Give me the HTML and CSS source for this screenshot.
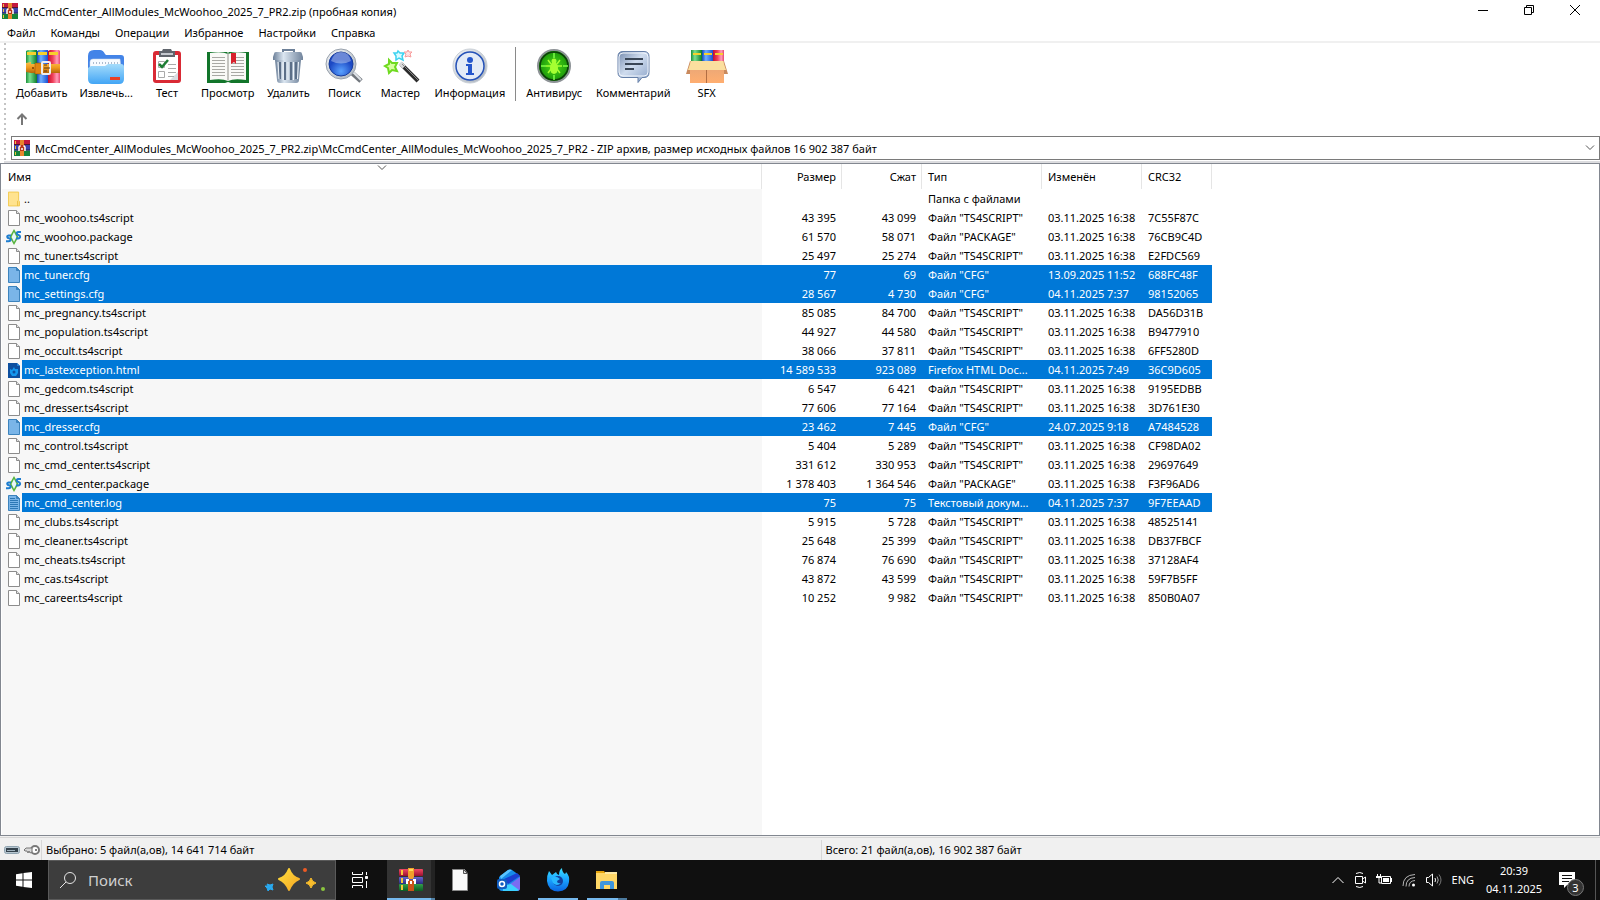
FILE: index.html
```html
<!DOCTYPE html>
<html lang="ru">

<head>
  <meta charset="UTF-8">
  <meta name="viewport" content="width=device-width, initial-scale=1.0">
  <title>McCmdCenter_AllModules_McWoohoo_2025_7_PR2.zip (пробная копия)</title>
  <link rel="stylesheet" href="styles.css">
</head>

<body>
  <!-- Общие значки -->
  <svg class="sprite" aria-hidden="true">
    <defs>
      <linearGradient id="gGreen"><stop offset="0" stop-color="#1c8f3c"/><stop offset=".35" stop-color="#7be08f"/><stop offset="1" stop-color="#0b7a2b"/></linearGradient>
      <linearGradient id="gBlue"><stop offset="0" stop-color="#1546b8"/><stop offset=".35" stop-color="#6fb0ff"/><stop offset="1" stop-color="#1a4fd0"/></linearGradient>
      <linearGradient id="gPink"><stop offset="0" stop-color="#c3102f"/><stop offset=".4" stop-color="#f0405a"/><stop offset=".75" stop-color="#ff9dba"/><stop offset="1" stop-color="#e8476e"/></linearGradient>
      <linearGradient id="gBelt" x2="0" y2="1"><stop offset="0" stop-color="#f9c04a"/><stop offset=".5" stop-color="#f09a1e"/><stop offset="1" stop-color="#b5650b"/></linearGradient>
      <linearGradient id="gFolder" x2="0" y2="1"><stop offset="0" stop-color="#a5dcfb"/><stop offset="1" stop-color="#42a5f5"/></linearGradient>
      <linearGradient id="gSteel"><stop offset="0" stop-color="#6b7f98"/><stop offset=".35" stop-color="#dbe6f1"/><stop offset="1" stop-color="#71849c"/></linearGradient>
      <linearGradient id="gRing" x2="1" y2="1"><stop offset="0" stop-color="#f4f6f8"/><stop offset="1" stop-color="#a7b0ba"/></linearGradient>
      <radialGradient id="gLens" cx=".5" cy=".8"><stop offset="0" stop-color="#5aa2ff"/><stop offset="1" stop-color="#1c49c4"/></radialGradient>
      <radialGradient id="gVirus"><stop offset="0" stop-color="#4ddb1c"/><stop offset="1" stop-color="#159006"/></radialGradient>
      <linearGradient id="gNote" x2="1" y2="1"><stop offset="0" stop-color="#7389ad"/><stop offset=".45" stop-color="#cfdcee"/><stop offset="1" stop-color="#8ba3c8"/></linearGradient>
      <linearGradient id="gBox" x2="0" y2="1"><stop offset="0" stop-color="#e3a579"/><stop offset="1" stop-color="#ffae70"/></linearGradient>
      <linearGradient id="gStar" x2="1" y2="1"><stop offset="0" stop-color="#ffdf3e"/><stop offset="1" stop-color="#f5a623"/></linearGradient>
      <linearGradient id="gFox" x2="0" y2="1"><stop offset="0" stop-color="#3ce0ff"/><stop offset=".5" stop-color="#1aa3ff"/><stop offset="1" stop-color="#0a63e0"/></linearGradient>
      <linearGradient id="gRed" x2="0" y2="1"><stop offset="0" stop-color="#ef4a63"/><stop offset="1" stop-color="#9c1030"/></linearGradient>
      <linearGradient id="gViolet" x2="0" y2="1"><stop offset="0" stop-color="#6464d0"/><stop offset="1" stop-color="#2a2c80"/></linearGradient>
      <linearGradient id="gLeaf" x2="0" y2="1"><stop offset="0" stop-color="#33a04b"/><stop offset="1" stop-color="#0b5c24"/></linearGradient>
    </defs>

    <symbol id="rar" viewBox="0 0 16 16">
      <path fill="#c2183f" d="M0 0h16v5H0z"/>
      <path fill="#3c43ab" d="M0 5h16v5.500H0z"/>
      <path fill="#15843a" d="M0 10.500h16V16H0z"/>
      <path fill="#51152e" d="M0 4h16v1H0z"/>
      <path fill="#20235f" d="M0 9.500h16v1H0z"/>
      <path fill="#f0c23a" d="M1 1h1v3H1zM1 6h1v3H1zM1 12h1v3H1z"/>
      <path fill="#e8862c" d="M6 0h4v5H6zM6 11h4v5H6z"/>
      <path fill="#b83618" d="M5 5h6v6H5z"/>
      <path fill="none" stroke="#fff" stroke-width="1.500" d="M5 11V7l1.500-1.500M11 11V7L9.500 5.500M8 8v2"/>
    </symbol>
    <symbol id="file" viewBox="0 0 12 16">
      <path fill="#fff" stroke="#8c8c8c" d="M.5.500h8l3 3v12H.5z"/>
      <path fill="#e4e4e4" stroke="#8c8c8c" d="M8.500.500v3h3"/>
    </symbol>
    <symbol id="file-selected" viewBox="0 0 12 16">
      <path fill="#7ab5e8" stroke="#3c83bd" d="M.5.500h8l3 3v12H.5z"/>
      <path fill="#3c83bd" stroke="#3c83bd" d="M8.500.500v3h3z"/>
    </symbol>
    <symbol id="file-log" viewBox="0 0 12 16">
      <path fill="#7ab5e8" stroke="#3c83bd" d="M.5.500h8l3 3v12H.5z"/>
      <path fill="#3c83bd" stroke="#3c83bd" d="M8.500.500v3h3z"/>
      <path stroke="#2d78b5" d="M2 3.500h5M2 5.500h8M2 7.500h8M2 9.500h8M2 11.500h8M2 13.500h8"/>
    </symbol>
    <symbol id="file-html" viewBox="0 0 12 16">
      <path fill="#0d4f9f" d="M0 1h9l3 3v12H0z"/>
      <path fill="#1e7fd6" d="M9 1v3h3z"/>
      <path fill="#1497ee" d="M2 7l2 1 2-3 1 2 3 0v4l-2 3H4l-2-3z"/>
      <circle cx="6" cy="10" r="1.500" fill="#0d4f9f"/>
    </symbol>
    <symbol id="folder" viewBox="0 0 13 16">
      <path fill="#ffe38f" stroke="#f2c94c" d="M.5.500h11v9l1 1v5H.5z"/>
      <path stroke="#e8bb3a" d="M10.500 10v5.500"/>
    </symbol>
    <symbol id="package" viewBox="0 0 16 16">
      <path fill="#57b33e" d="M8 0l4.500 8L8 16 3.500 8z"/>
      <path fill="#eaf6fb" d="M8 3l2.500 5L8 13 5.500 8z"/>
      <path fill="none" stroke="#1f7ed0" stroke-width="2" d="M5 6.500H2.500C.5 7 1 9 3 9.200s2.500 3-.5 3.100H0M15 3h-3c-2 .5-1.500 2.600.5 3s2.500 3.200-.5 3.400h-2"/>
    </symbol>
    <symbol id="chevron" viewBox="0 0 10 6">
      <path fill="none" stroke="#555" d="M1 .500l4 4 4-4"/>
    </symbol>
  </svg>

  <header class="titlebar">
    <svg class="app-icon"><use href="#rar"/></svg>
    <h1>McCmdCenter_AllModules_McWoohoo_2025_7_PR2.zip (пробная копия)</h1>
    <div class="window-buttons">
      <button aria-label="Свернуть"><svg viewBox="0 0 10 10"><path d="M0 5.500h10"/></svg></button>
      <button aria-label="Восстановить"><svg viewBox="0 0 10 10"><path d="M.5 2.500h7v7h-7zM2.500 2.500v-2h7v7h-2"/></svg></button>
      <button aria-label="Закрыть"><svg viewBox="0 0 10 10"><path d="M0 0l10 10M10 0L0 10"/></svg></button>
    </div>
  </header>

  <nav class="menu">
    <button>Файл</button>
    <button>Команды</button>
    <button>Операции</button>
    <button>Избранное</button>
    <button>Настройки</button>
    <button>Справка</button>
  </nav>

  <section class="rebar">
    <div class="toolbar">
      <button>
        <svg viewBox="0 0 44 36">
          <path fill="url(#gGreen)" d="M6 3l2-1h9v33H6z"/><path fill="url(#gBlue)" d="M17 3l2-1h9v33H17z"/><path fill="url(#gPink)" d="M28 3l2-1h9l1 1v32H28z"/>
          <path fill="#f7d02c" d="M7 4h9v3H7zM18 4h9v3h-9zM29 4h9v3h-9z"/>
          <path fill="url(#gBelt)" d="M6 15l5-1v11l-5-1zM11 16h29v9H11z"/>
          <circle cx="13" cy="20" r="1" fill="#7a3d05"/><circle cx="18" cy="20" r="1" fill="#7a3d05"/>
          <path fill="#e08613" stroke="#8b4b08" stroke-width=".5" d="M15 15h7v11h-7z"/>
          <rect x="22" y="14" width="8" height="12" rx="1" fill="none" stroke="#eee" stroke-width="2"/><path stroke="#5a3a10" d="M24 20h6M24 17h3M24 23h3"/>
        </svg>
        Добавить
      </button>
      <button>
        <svg viewBox="0 0 44 36">
          <path fill="#4384e8" d="M4 8q0-6 6-6h6q3 0 5 4l1 1h15q3 0 3 3v20H4z"/>
          <path fill="#f8fbff" stroke="#c8d4e4" stroke-width=".5" d="M6 14q0-3 3-3h27l1 9H6z"/>
          <path stroke="#aebccf" stroke-dasharray="1 2" stroke-width="2" d="M9 15h27"/>
          <path fill="url(#gFolder)" d="M4 20l3-2h14l3-2h13q3 0 3 3v12q0 5-5 5H9q-5 0-5-5z"/>
          <path fill="#e84025" d="M26 29h10v3H26z"/>
        </svg>
        Извлечь...
      </button>
      <button>
        <svg viewBox="0 0 44 36">
          <rect x="8" y="3" width="28" height="32" rx="3" fill="#d92a35"/><path fill="#fff" d="M11 7h22v25H11z"/><path fill="#d7dbe0" d="M33 24v8h-8z"/>
          <path fill="#60656d" d="M14 3h3l1-2h8l1 2h3v6H14z"/><path fill="#c4c8ce" d="M16 5h12v2H16z"/>
          <path fill="none" stroke="#aaa" d="M13.500 13.500h6v6h-6zM13.500 23.500h6v6h-6zM23 16.500h8M23 20.500h8M23 24.500h8M23 28.500h6"/>
          <path fill="none" stroke="#1e7e34" stroke-width="2.500" d="M14 16l3 3 6-7"/>
        </svg>
        Тест
      </button>
      <button>
        <svg viewBox="0 0 44 36">
          <path fill="#12752a" d="M1 4h20l1 1 1-1h20v31H25l-3-1-3 1H1z"/>
          <path fill="#f9f9f7" d="M4 5q12-2 18 1 6-3 18-1v27q-12-2-18 1-6-3-18-1z"/>
          <path fill="#c4c4c0" d="M21 5l1 1 1-1v27l-1 1-1-1z"/>
          <path stroke="#a8a8a4" d="M6 9.500h13M6 12.500h13M6 15.500h13M6 18.500h13M6 21.500h13M6 24.500h13M6 27.500h13M30 9.500h8M30 12.500h8M25 15.500h13M25 18.500h13M25 21.500h13M25 24.500h13M25 27.500h13"/>
          <path fill="#d8202c" d="M25 5h5v11l-2-2-3 2z"/>
        </svg>
        Просмотр
      </button>
      <button>
        <svg viewBox="0 0 44 36">
          <path fill="none" stroke="#6d8098" stroke-width="2" d="M17 4V2h11v2"/>
          <path fill="url(#gSteel)" d="M8 6q0-2 2-2h24q2 0 2 2l1 3v3H7V9z"/>
          <path fill="url(#gSteel)" d="M9 12h26l-2 20q0 3-3 3H14q-3 0-3-3z"/>
          <path stroke="#5c6f88" stroke-width="2" d="M14 14v17M19 14v18M25 14v18M30 14v17"/>
          <path stroke="#eef4fa" d="M12 14l1 17M17 14v18M22 14v18M27.500 14v18M32.500 14l-1 17"/>
        </svg>
        Удалить
      </button>
      <button>
        <svg viewBox="0 0 44 36">
          <path stroke="#71767d" stroke-width="5" d="M29 24l10 9"/><path stroke="#dfe3e8" stroke-width="2" d="M30 23l9 9"/>
          <circle cx="19" cy="16" r="15" fill="url(#gRing)" stroke="#98a1ac"/>
          <circle cx="19" cy="16" r="12" fill="url(#gLens)" stroke="#173b9c"/>
          <path fill="#fff" opacity=".35" d="M9 13q3-9 10-9 8 0 10 9-10 5-20 0z"/>
        </svg>
        Поиск
      </button>
      <button>
        <svg viewBox="0 0 44 36">
          <path fill="none" stroke="#2c2c2c" stroke-width="4" d="M23 16l17 17"/><path stroke="#d8d8d8" stroke-width="4" d="M22 15l4 4"/><path stroke="#888" d="M24 16l17 17"/>
          <path fill="#d6ffa0" stroke="#6fda20" stroke-width="2" d="M11 12l3 3 5 0-2 4 2 4-5-1-3 3-1-5-3-2 4-2z"/>
          <path fill="#d9fbff" stroke="#3cd2f0" stroke-width="1.500" d="M20 3l2 2 4 0-2 3 1 4-4-2-3 2 0-4-2-3 3 0z"/>
          <path fill="#ffe3e3" stroke="#f79c9c" d="M30 2l1 2h3l-2 2 1 3-3-1-3 1 1-3-2-2h3z"/>
        </svg>
        Мастер
      </button>
      <button>
        <svg viewBox="0 0 44 36">
          <circle cx="22" cy="18" r="17" fill="url(#gRing)" stroke="#c9cfd6"/>
          <circle cx="22" cy="18" r="14" fill="#e3ebf7" stroke="#2552b8" stroke-width="1.500"/>
          <circle cx="22" cy="12" r="3" fill="#2456cc"/><path fill="#2456cc" d="M18 16h6v9h2v2h-8v-2h2v-7h-2z"/>
        </svg>
        Информация
      </button>
      <span class="separator"></span>
      <button>
        <svg viewBox="0 0 44 36">
          <circle cx="22" cy="18" r="16" fill="url(#gVirus)" stroke="#8d9296" stroke-width="2"/><circle cx="22" cy="18" r="14" fill="none" stroke="#0c3d0a" stroke-width="1.500"/>
          <path stroke="#7dff4a" stroke-width="1.500" d="M22 5v5M22 27v5M9 18h5M31 18h5"/>
          <path fill="none" stroke="#a5ff32" stroke-width="1.500" d="M16 12l3 4M28 12l-3 4M14 18h5M30 18h-5M16 25l3-4M28 25l-3-4"/>
          <ellipse cx="22" cy="20" rx="4" ry="6" fill="#a5ff32"/><circle cx="22" cy="13" r="2.500" fill="#a5ff32"/>
        </svg>
        Антивирус
      </button>
      <button>
        <svg viewBox="0 0 44 36">
          <path fill="url(#gNote)" stroke="#657fa8" d="M12 3.500h21q5 0 5 5v16q0 5-5 5h-2l-4 5v-5H12q-5 0-5-5v-16q0-5 5-5z"/>
          <path fill="none" stroke="#f0f5fc" d="M12 5h21q4 0 4 4v15q0 4-4 4H12q-4 0-4-4V9q0-4 4-4z"/>
          <path stroke="#3a4656" stroke-width="2" d="M14 11h18M14 16h18M14 21h9"/>
        </svg>
        Комментарий
      </button>
      <button>
        <svg viewBox="0 0 44 36">
          <path fill="url(#gGreen)" d="M6 2h11v12H6z"/><path fill="url(#gBlue)" d="M17 2h11v12H17z"/><path fill="url(#gPink)" d="M28 2h11v12H28z"/>
          <path fill="#f7d02c" d="M8 5h8v2H8zM19 5h8v2h-8zM30 5h8v2h-8z"/>
          <path fill="#c98a5e" d="M5 13L1 26h4v-6zM39 13l4 13h-4v-6z"/>
          <path fill="url(#gBox)" d="M5 13h34v22H5z"/><path fill="#fbdf9f" d="M6 13h32l3 9H3z"/><path stroke="#b26e43" d="M21.500 22v13"/>
        </svg>
        SFX
      </button>
    </div>

    <button class="up" aria-label="На один уровень вверх">
      <svg viewBox="0 0 12 12"><path d="M6 12V1.500M1.500 6L6 1.500 10.500 6"/></svg>
    </button>

    <div class="address">
      <svg class="app-icon"><use href="#rar"/></svg>
      <select aria-label="Адрес">
        <option>McCmdCenter_AllModules_McWoohoo_2025_7_PR2.zip\McCmdCenter_AllModules_McWoohoo_2025_7_PR2 - ZIP архив, размер исходных файлов 16 902 387 байт</option>
      </select>
      <svg class="chevron"><use href="#chevron"/></svg>
    </div>
  </section>

  <main class="list">
    <svg class="sort-mark"><use href="#chevron"/></svg>
    <table>
      <colgroup>
        <col class="col-name"><col class="col-size"><col class="col-size"><col class="col-type"><col class="col-date"><col class="col-crc">
      </colgroup>
      <thead>
        <tr><th>Имя</th><th>Размер</th><th>Сжат</th><th>Тип</th><th>Изменён</th><th>CRC32</th></tr>
      </thead>
      <tbody>
        <tr><td><svg><use href="#folder"/></svg><span>..</span></td><td></td><td></td><td>Папка с файлами</td><td></td><td></td></tr>
        <tr><td><svg><use href="#file"/></svg><span>mc_woohoo.ts4script</span></td><td>43 395</td><td>43 099</td><td>Файл "TS4SCRIPT"</td><td>03.11.2025 16:38</td><td>7C55F87C</td></tr>
        <tr><td><svg class="wide"><use href="#package"/></svg><span>mc_woohoo.package</span></td><td>61 570</td><td>58 071</td><td>Файл "PACKAGE"</td><td>03.11.2025 16:38</td><td>76CB9C4D</td></tr>
        <tr><td><svg><use href="#file"/></svg><span>mc_tuner.ts4script</span></td><td>25 497</td><td>25 274</td><td>Файл "TS4SCRIPT"</td><td>03.11.2025 16:38</td><td>E2FDC569</td></tr>
        <tr class="selected"><td><svg><use href="#file-selected"/></svg><span>mc_tuner.cfg</span></td><td>77</td><td>69</td><td>Файл "CFG"</td><td>13.09.2025 11:52</td><td>688FC48F</td></tr>
        <tr class="selected"><td><svg><use href="#file-selected"/></svg><span>mc_settings.cfg</span></td><td>28 567</td><td>4 730</td><td>Файл "CFG"</td><td>04.11.2025 7:37</td><td>98152065</td></tr>
        <tr><td><svg><use href="#file"/></svg><span>mc_pregnancy.ts4script</span></td><td>85 085</td><td>84 700</td><td>Файл "TS4SCRIPT"</td><td>03.11.2025 16:38</td><td>DA56D31B</td></tr>
        <tr><td><svg><use href="#file"/></svg><span>mc_population.ts4script</span></td><td>44 927</td><td>44 580</td><td>Файл "TS4SCRIPT"</td><td>03.11.2025 16:38</td><td>B9477910</td></tr>
        <tr><td><svg><use href="#file"/></svg><span>mc_occult.ts4script</span></td><td>38 066</td><td>37 811</td><td>Файл "TS4SCRIPT"</td><td>03.11.2025 16:38</td><td>6FF5280D</td></tr>
        <tr class="selected"><td><svg><use href="#file-html"/></svg><span>mc_lastexception.html</span></td><td>14 589 533</td><td>923 089</td><td>Firefox HTML Doc...</td><td>04.11.2025 7:49</td><td>36C9D605</td></tr>
        <tr><td><svg><use href="#file"/></svg><span>mc_gedcom.ts4script</span></td><td>6 547</td><td>6 421</td><td>Файл "TS4SCRIPT"</td><td>03.11.2025 16:38</td><td>9195EDBB</td></tr>
        <tr><td><svg><use href="#file"/></svg><span>mc_dresser.ts4script</span></td><td>77 606</td><td>77 164</td><td>Файл "TS4SCRIPT"</td><td>03.11.2025 16:38</td><td>3D761E30</td></tr>
        <tr class="selected"><td><svg><use href="#file-selected"/></svg><span>mc_dresser.cfg</span></td><td>23 462</td><td>7 445</td><td>Файл "CFG"</td><td>24.07.2025 9:18</td><td>A7484528</td></tr>
        <tr><td><svg><use href="#file"/></svg><span>mc_control.ts4script</span></td><td>5 404</td><td>5 289</td><td>Файл "TS4SCRIPT"</td><td>03.11.2025 16:38</td><td>CF98DA02</td></tr>
        <tr><td><svg><use href="#file"/></svg><span>mc_cmd_center.ts4script</span></td><td>331 612</td><td>330 953</td><td>Файл "TS4SCRIPT"</td><td>03.11.2025 16:38</td><td>29697649</td></tr>
        <tr><td><svg class="wide"><use href="#package"/></svg><span>mc_cmd_center.package</span></td><td>1 378 403</td><td>1 364 546</td><td>Файл "PACKAGE"</td><td>03.11.2025 16:38</td><td>F3F96AD6</td></tr>
        <tr class="selected"><td><svg><use href="#file-log"/></svg><span>mc_cmd_center.log</span></td><td>75</td><td>75</td><td>Текстовый докум...</td><td>04.11.2025 7:37</td><td>9F7EEAAD</td></tr>
        <tr><td><svg><use href="#file"/></svg><span>mc_clubs.ts4script</span></td><td>5 915</td><td>5 728</td><td>Файл "TS4SCRIPT"</td><td>03.11.2025 16:38</td><td>48525141</td></tr>
        <tr><td><svg><use href="#file"/></svg><span>mc_cleaner.ts4script</span></td><td>25 648</td><td>25 399</td><td>Файл "TS4SCRIPT"</td><td>03.11.2025 16:38</td><td>DB37FBCF</td></tr>
        <tr><td><svg><use href="#file"/></svg><span>mc_cheats.ts4script</span></td><td>76 874</td><td>76 690</td><td>Файл "TS4SCRIPT"</td><td>03.11.2025 16:38</td><td>37128AF4</td></tr>
        <tr><td><svg><use href="#file"/></svg><span>mc_cas.ts4script</span></td><td>43 872</td><td>43 599</td><td>Файл "TS4SCRIPT"</td><td>03.11.2025 16:38</td><td>59F7B5FF</td></tr>
        <tr><td><svg><use href="#file"/></svg><span>mc_career.ts4script</span></td><td>10 252</td><td>9 982</td><td>Файл "TS4SCRIPT"</td><td>03.11.2025 16:38</td><td>850B0A07</td></tr>
      </tbody>
    </table>
  </main>

  <footer class="status">
    <div class="status-icons">
      <svg width="16" height="12" viewBox="0 0 16 12"><rect x=".5" y="2.500" width="15" height="7" rx="2" fill="#b7c6d0" stroke="#8fa3b0"/><path fill="#34424c" d="M2 4h12v4H2z"/><path fill="#9fb1bd" d="M3 6h8v1H3z"/></svg>
      <svg width="16" height="12" viewBox="0 0 16 12"><circle cx="11" cy="6" r="4" fill="#fff" stroke="#777" stroke-width="2"/><circle cx="12" cy="6" r="1" fill="#555"/><path fill="#d8d8d8" stroke="#777" d="M8 4H2L0 6l1 1h2l1 2 1-2 1 2 2-1z"/></svg>
    </div>
    <p>Выбрано: 5 файл(а,ов), 14 641 714 байт</p>
    <p>Всего: 21 файл(а,ов), 16 902 387 байт</p>
  </footer>

  <div class="taskbar">
    <button class="start" aria-label="Пуск">
      <svg width="16" height="16" viewBox="0 0 16 16"><path fill="#fff" d="M0 2.200L6.500 1.300V7.500H0zM7.500 1.100L16 0v7.500H7.500zM0 8.500h6.500v6.200L0 13.800zM7.500 8.500H16V16l-8.500-1.100z"/></svg>
    </button>
    <label class="search">
      <svg width="16" height="16" viewBox="0 0 16 16"><circle cx="10" cy="6" r="5.500" fill="none" stroke="#e6e6e6"/><path stroke="#e6e6e6" d="M6 10L0 16"/></svg>
      <input type="text" placeholder="Поиск" aria-label="Поиск">
      <svg width="62" height="26" viewBox="0 0 62 26">
        <path fill="url(#gStar)" stroke="url(#gStar)" stroke-width="2" stroke-linejoin="round" d="M25 2q3 8 10 10-7 3-10 11-3-8-10-11 7-2 10-10z"/>
        <path fill="#f9bd2c" stroke="#f9bd2c" stroke-linejoin="round" d="M47 11q1 4 5 5-4 1-5 5-1-4-5-5 4-1 5-5z"/>
        <path fill="#29a9ef" stroke="#29a9ef" stroke-linejoin="round" d="M3 17l3 1 3-1-1 3 1 3-3-1-2 2-1-3-2-2 3 0z"/>
        <circle cx="41" cy="3" r="2" fill="#ee5a24"/><circle cx="59" cy="22" r="2" fill="#8bc53f"/>
      </svg>
    </label>
    <button class="task-view" aria-label="Представление задач">
      <svg width="16" height="16" viewBox="0 0 16 16" fill="none" stroke="#fff"><path d="M.5 0v2.500h10V0M.5 16v-2.500h10V16M.5 5.500h10v5H.5zM14.500 0v3M14.500 9v7"/><path fill="#fff" d="M13.500 4.500h2v2h-2z"/></svg>
    </button>
    <div class="apps">
      <button class="active stacked" aria-label="WinRAR">
        <svg width="24" height="24" viewBox="0 0 24 24">
          <rect y="1" width="24" height="7" rx="1" fill="url(#gRed)"/><rect y="9" width="24" height="7" rx="1" fill="url(#gViolet)"/><rect y="16" width="24" height="7" rx="1" fill="url(#gLeaf)"/>
          <path fill="#f5c83a" d="M2 2h2v5H2zM2 10h2v5H2zM2 17h2v5H2z"/>
          <path fill="#f0a02c" d="M9 0h6v9l-1 2h-4l-1-2z"/><path fill="#c8541a" d="M9 12h6v11H9z"/><path fill="#ffdc56" d="M10 1h4v2h-4z"/>
          <path fill="none" stroke="#fff" stroke-width="2" d="M8 16v-4h2M16 16v-4h-2M12 13v3"/>
        </svg>
      </button>
      <button aria-label="Документ">
        <svg width="24" height="24" viewBox="0 0 24 24"><path fill="#fafafa" stroke="#8a8a8a" d="M4.500 1.500h12l3 4v17h-15z"/><path fill="#ddd" stroke="#555" d="M15.500 1.500v4h4z"/></svg>
      </button>
      <button aria-label="Outlook">
        <svg width="24" height="24" viewBox="0 0 24 24">
          <path fill="#168be8" d="M2 9L11 2q2-1 4 0l7 5q1 1 1 3v10q0 3-3 3H5q-3 0-3-3z"/>
          <path fill="#59c4ff" d="M3 8L11 2q2-1 4 0L4 11z"/><path fill="#1b3fd0" d="M7 11L20 5l3 3-12 8z"/><path fill="#7a6cf2" d="M12 17l11-8v11q0 3-3 3z"/><path fill="#3bd0ff" d="M6 18l8-2 8 6-2 1H6z"/>
          <rect y="11" width="10" height="10" rx="2" fill="#0f5cc0"/><circle cx="5" cy="16" r="2.500" fill="none" stroke="#fff" stroke-width="1.500"/>
        </svg>
      </button>
      <button class="running" aria-label="Firefox">
        <svg width="24" height="24" viewBox="0 0 24 24">
          <path fill="url(#gFox)" d="M3 3l3 4 4-3q1 3 3 3 0-5 3-7 0 4 3 6 1-1 1-2 4 4 3 10-1 9-11 9.500Q2 23 1 13 .5 8 3 3z"/>
          <circle cx="12" cy="13" r="5" fill="#14409e"/><path fill="#28b7ff" d="M5 10q5-3 9 1l-3 2q0 3 4 2-4 4-8 0z"/>
        </svg>
      </button>
      <button class="running stacked" aria-label="Проводник">
        <svg width="24" height="24" viewBox="0 0 24 24">
          <path fill="#e6a50e" d="M1 3h8l2 3H1z"/><path fill="#ffd766" d="M1 5h21v16H1z"/><path fill="#fde9a5" d="M10 4h12v2H10z"/>
          <path fill="#3f96dd" d="M5 21v-6q0-2 2-2h10q2 0 2 2v6h-4v-4H9v4z"/>
        </svg>
      </button>
    </div>
    <div class="tray">
      <svg width="12" height="8" viewBox="0 0 12 8" fill="none" stroke="#fff"><path d="M.5 7L6 1.500 11.500 7"/></svg>
      <svg width="12" height="16" viewBox="0 0 12 16" fill="none" stroke="#fff"><path d="M2 1.500q4-2 7 0M2 14.500q4 2 7 0M1.500 4.500h7v7h-7zM8.500 7l3-2v6l-3-2"/></svg>
      <svg width="16" height="14" viewBox="0 0 16 14" fill="none" stroke="#fff"><path d="M1.500 1v3h3V1M3 4v6h2M5.500 3.500h9v7h-9z"/><path fill="#fff" stroke="none" d="M7 5h6v4H7zM15 5h1v4h-1zM0 3h5v2H0z"/></svg>
      <svg width="14" height="14" viewBox="0 0 14 14" fill="none" stroke="#b5b5b5"><path d="M1 13Q1 2 13 1.500M4 13.500Q4 5 13 4.500M7 13.500Q7 8 13 7.500"/><circle cx="11.500" cy="12" r="1.500" fill="#fff" stroke="none"/></svg>
      <svg width="16" height="14" viewBox="0 0 16 14" fill="none" stroke="#fff"><path d="M.5 4.500h2l4-3.500v12l-4-3.500h-2zM9 5q1 2 0 4"/><path stroke="#aaa" d="M11 3.500q2.500 3.500 0 7"/><path stroke="#777" d="M13 1.500q4 5.500 0 11"/></svg>
      <span class="lang">ENG</span>
      <time class="clock" datetime="2025-11-04T20:39"><span>20:39</span><span>04.11.2025</span></time>
      <button class="notifications" aria-label="Уведомления">
        <svg width="16" height="16" viewBox="0 0 16 16"><path fill="#fff" d="M0 0h16v13H8l-3 3v-3H0z"/><path stroke="#111" d="M3 3.500h10M3 6.500h10M3 9.500h7"/></svg>
        <span class="badge">3</span>
      </button>
    </div>
  </div>
</body>

</html>
```

FILE: styles.css
```css
* {
  box-sizing: border-box;
}

body {
  margin: 0;
  height: 100vh;
  display: flex;
  flex-direction: column;
  font-family: "Noto Sans", "Open Sans", sans-serif;
  font-size: 11px;
  line-height: 16px;
  color: #000;
  background-color: #fff;
  overflow: hidden;
}

button {
  font: inherit;
  color: inherit;
  padding: 0;
  border: none;
  background: none;
}

h1,
p {
  margin: 0;
  font-size: 11px;
  font-weight: normal;
}

.sprite {
  position: absolute;
  width: 0;
  height: 0;
}

.app-icon {
  width: 16px;
  height: 16px;
  flex: none;
}

/* Заголовок окна */
.titlebar {
  display: flex;
  align-items: center;
  gap: 5px;
  height: 22px;
  padding-left: 2px;
}

.titlebar h1 {
  padding-top: 2px;
}

.window-buttons {
  display: flex;
  align-self: stretch;
  margin-left: auto;
  padding-right: 2px;
}

.window-buttons button {
  width: 46px;
  height: 20px;
  display: flex;
  align-items: center;
  justify-content: center;
}

.window-buttons svg {
  width: 10px;
  height: 10px;
  fill: none;
  stroke: #000;
}

/* Меню */
.menu {
  display: flex;
  align-items: center;
  gap: 15px;
  height: 21px;
  padding: 2px 7px 0;
  border-bottom: 2px solid #f0f0f0;
}

/* Панель инструментов */
.rebar {
  display: flex;
  flex-direction: column;
  margin-left: 4px;
  padding: 4px 0 1px 6px;
  border-bottom: 2px solid #dcdcdf;
  background: repeating-linear-gradient(#c4c4c4 0 2px, #fff 2px 5px) 0 0 / 2px 100% no-repeat;
}

.toolbar {
  display: flex;
}

.toolbar button {
  display: flex;
  flex-direction: column;
  align-items: center;
  gap: 1px;
  min-width: 54px;
  padding: 1px 6px 0;
}

.toolbar svg {
  width: 44px;
  height: 36px;
}

.toolbar .separator ~ button {
  padding: 1px 7px 0;
}

.separator {
  width: 1px;
  height: 54px;
  margin: 0 3px 0 4px;
  background-color: #8a8a8a;
}

.up {
  align-self: flex-start;
  display: flex;
  margin: 12px 6px 11px;
}

.up svg {
  width: 12px;
  height: 12px;
  fill: none;
  stroke: #777;
  stroke-width: 2;
}

.address {
  display: flex;
  align-items: center;
  height: 24px;
  margin-left: 1px;
  padding: 0 4px 0 2px;
  border: 1px solid #7a7a7a;
}

.address select {
  flex: 1;
  min-width: 0;
  appearance: none;
  font: inherit;
  color: inherit;
  padding: 1px 5px 0;
  border: none;
  background: none;
}

.chevron,
.sort-mark {
  width: 10px;
  height: 6px;
}

/* Список файлов */
.list {
  flex: 1;
  min-height: 0;
  position: relative;
  border: 1px solid #828790;
  background: linear-gradient(#f7f7f7, #f7f7f7) 1px 0 / 760px 100% no-repeat;
}

.sort-mark {
  position: absolute;
  top: 1px;
  left: 376px;
}

table {
  table-layout: fixed;
  width: 1211px;
  border-collapse: collapse;
}

.col-name {
  width: 761px;
}

.col-size {
  width: 80px;
}

.col-type {
  width: 120px;
}

.col-date {
  width: 100px;
}

.col-crc {
  width: 70px;
}

thead {
  background-color: #fff;
}

th {
  height: 25px;
  padding: 0 6px;
  font-weight: normal;
  text-align: left;
  background: linear-gradient(#e5e5e5, #e5e5e5) right / 1px 100% no-repeat;
}

th:first-child {
  padding-left: 7px;
}

td {
  height: 19px;
  padding: 0 6px;
  line-height: 19px;
  white-space: nowrap;
}

th:nth-child(2),
th:nth-child(3),
td:nth-child(2),
td:nth-child(3) {
  text-align: right;
}

td:first-child {
  display: flex;
  align-items: center;
  padding: 0 0 0 5px;
}

td svg {
  width: 12px;
  height: 16px;
  margin: 0 2px;
}

td svg.wide {
  width: 16px;
  margin: 0;
}

td span {
  flex: 1;
  padding-left: 2px;
}

.selected td:not(:first-child),
.selected td span {
  background-color: #0078d7;
  color: #fff;
}

/* Строка состояния */
.status {
  display: flex;
  align-items: center;
  height: 24px;
  padding-top: 2px;
  border-top: 1px solid #f0f0f0;
  background-color: #f0f0f0;
  box-shadow: inset 0 1px #d7d7d7;
}

.status-icons {
  display: flex;
  gap: 4px;
  width: 41px;
  padding-left: 4px;
}

.status p {
  flex: 1;
  height: 20px;
  line-height: 20px;
  padding-left: 4px;
  border-left: 1px solid #d7d7d7;
}

/* Панель задач */
.taskbar {
  display: flex;
  height: 40px;
  color: #fff;
  background-color: #101010;
}

.start,
.task-view {
  display: flex;
  align-items: center;
  justify-content: center;
  width: 48px;
}

.search {
  display: flex;
  align-items: center;
  width: 288px;
  padding: 0 9px 0 11px;
  border: 1px solid #5a5a5a;
  background-color: #3d3d3d;
}

.search input {
  flex: 1;
  min-width: 0;
  padding: 0 12px;
  border: none;
  background: none;
  font: inherit;
  font-size: 15px;
  color: #fff;
}

.search input::placeholder {
  color: #d0d0d0;
}

.apps {
  display: flex;
  gap: 1px;
  margin-left: 3px;
}

.apps button {
  display: flex;
  align-items: center;
  justify-content: center;
  width: 48px;
}

.apps .active {
  background: linear-gradient(#76b9ed, #76b9ed) bottom / 100% 2px no-repeat, #333;
}

.apps .active.stacked {
  box-shadow: inset -4px 0 rgba(0, 0, 0, 0.3);
}

.apps .running {
  background: linear-gradient(#76b9ed, #76b9ed) bottom / 40px 2px no-repeat;
}

.apps .running.stacked {
  background-image: linear-gradient(90deg, #76b9ed 31px, #4c7a9e 31px);
}

.tray {
  display: flex;
  align-items: center;
  gap: 10px;
  margin-left: auto;
  padding-right: 4px;
}

.clock {
  display: flex;
  flex-direction: column;
  width: 60px;
  line-height: 18px;
  text-align: center;
}

.notifications {
  position: relative;
  display: flex;
  align-items: center;
  align-self: stretch;
  width: 42px;
  padding-left: 5px;
  border-right: 1px solid #555;
}

.badge {
  position: absolute;
  right: 11px;
  bottom: 4px;
  width: 17px;
  height: 17px;
  line-height: 15px;
  border: 1px solid #777;
  border-radius: 50%;
  background-color: #333;
}
```
